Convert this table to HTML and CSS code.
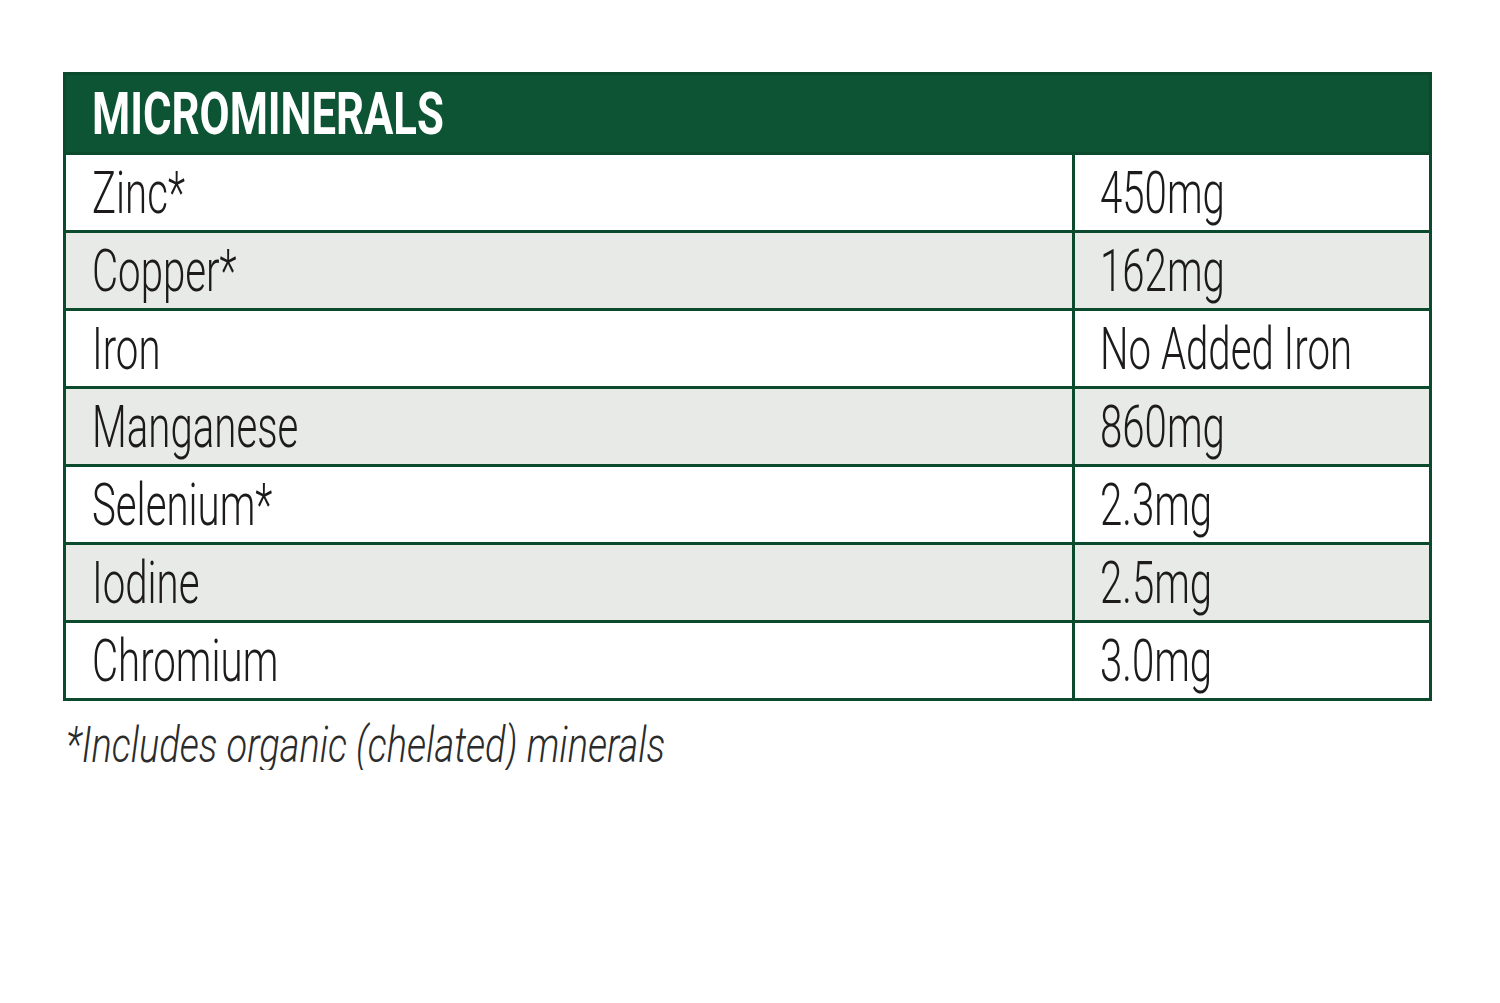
FILE: index.html
```html
<!DOCTYPE html>
<html>
<head>
<meta charset="utf-8">
<link rel="stylesheet" href="styles.css">
</head>
<body>
<div class="panel">
  <table class="minerals">
    <colgroup>
      <col class="c-name">
      <col class="c-val">
    </colgroup>
    <thead>
      <tr class="head"><th colspan="2"><span class="sq bold">MICROMINERALS</span></th></tr>
    </thead>
    <tbody>
      <tr><td class="name"><span class="sq">Zinc*</span></td><td class="val"><span class="sq">450mg</span></td></tr>
      <tr class="alt"><td class="name"><span class="sq">Copper*</span></td><td class="val"><span class="sq">162mg</span></td></tr>
      <tr><td class="name"><span class="sq">Iron</span></td><td class="val"><span class="sq">No Added Iron</span></td></tr>
      <tr class="alt"><td class="name"><span class="sq">Manganese</span></td><td class="val"><span class="sq">860mg</span></td></tr>
      <tr><td class="name"><span class="sq">Selenium*</span></td><td class="val"><span class="sq">2.3mg</span></td></tr>
      <tr class="alt"><td class="name"><span class="sq">Iodine</span></td><td class="val"><span class="sq">2.5mg</span></td></tr>
      <tr><td class="name"><span class="sq">Chromium</span></td><td class="val"><span class="sq">3.0mg</span></td></tr>
    </tbody>
  </table>
  <p class="note"><span class="sq it">*Includes organic (chelated) minerals</span></p>
</div>
</body>
</html>
```
FILE: styles.css
```css
html, body {
  margin: 0;
  padding: 0;
  background: #ffffff;
}
body {
  font-family: Roboto, "Liberation Sans", sans-serif;
  color: #1c1a1b;
}
.panel {
  padding: 72px 0 0 63px;
  width: 1366px;
}
.minerals {
  width: 1366px;
  border-collapse: collapse;
  table-layout: fixed;
  border: 3px solid #0b4a2d;
}
.c-name {
  width: 1009px;
}
.c-val {
  width: 357px;
}
.minerals th {
  background: #0c5434;
  height: 77px;
  padding: 0 0 0 26px;
  text-align: left;
  color: #ffffff;
  font-size: 59px;
  font-weight: 700;
  line-height: 1;
  border: 3px solid #0b4a2d;
}
.minerals td {
  height: 75px;
  padding: 0 0 0 26px;
  border: 3px solid #0b4a2d;
  font-size: 60px;
  font-weight: 300;
  line-height: 1;
  vertical-align: middle;
  white-space: nowrap;
}
.minerals td.val {
  padding-left: 25px;
}
.minerals tr.alt td {
  background: #e8eae7;
}
.sq {
  display: inline-block;
  transform: scaleX(0.67);
  transform-origin: left center;
  white-space: nowrap;
}
.sq.bold {
  transform: scaleX(0.74);
}
.sq.it {
  transform: scaleX(0.775);
}
.note {
  margin: 20px 0 0 3px;
  font-size: 49px;
  font-weight: 300;
  font-style: italic;
  color: #2b2b2b;
  line-height: 1;
}
```
